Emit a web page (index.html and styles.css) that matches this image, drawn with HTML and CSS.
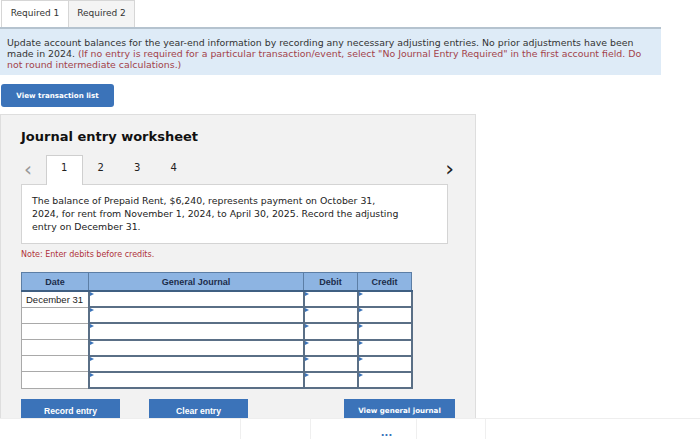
FILE: index.html
```html
<!DOCTYPE html>
<html lang="en">
<head>
    <meta charset="UTF-8">
    <title>Journal entry worksheet</title>
    <link rel="stylesheet" href="styles.css">
</head>
<body>
<div class="tabs">
    <div class="tab active">Required 1</div>
    <div class="tab">Required 2</div>
</div>

<div class="info">
    Update account balances for the year-end information by recording any necessary adjusting entries. No prior adjustments have been made in 2024.
    <span class="hint">(If no entry is required for a particular transaction/event, select "No Journal Entry Required" in the first account field. Do not round intermediate calculations.)</span>
</div>

<button class="btn btn-list">View transaction list</button>

<div class="worksheet">
    <h2>Journal entry worksheet</h2>

    <!-- entry pager -->
    <div class="pager">
        <span class="arrow prev">&lsaquo;</span>
        <span class="page current">1</span>
        <span class="page">2</span>
        <span class="page">3</span>
        <span class="page">4</span>
        <span class="arrow next">&rsaquo;</span>
    </div>

    <div class="desc">
        The balance of Prepaid Rent, $6,240, represents payment on October 31, 2024, for rent from November 1, 2024, to April 30, 2025. Record the adjusting entry on December 31.
    </div>

    <p class="note">Note: Enter debits before credits.</p>

    <table class="journal">
        <thead>
        <tr>
            <th class="col-date">Date</th>
            <th class="col-acct">General Journal</th>
            <th class="col-num">Debit</th>
            <th class="col-num">Credit</th>
        </tr>
        </thead>
        <tbody>
        <tr><td class="date">December 31</td><td class="field"></td><td class="field"></td><td class="field"></td></tr>
        <tr><td class="date"></td><td class="field"></td><td class="field"></td><td class="field"></td></tr>
        <tr><td class="date"></td><td class="field"></td><td class="field"></td><td class="field"></td></tr>
        <tr><td class="date"></td><td class="field"></td><td class="field"></td><td class="field"></td></tr>
        <tr><td class="date"></td><td class="field"></td><td class="field"></td><td class="field"></td></tr>
        <tr><td class="date"></td><td class="field"></td><td class="field"></td><td class="field"></td></tr>
        </tbody>
    </table>

    <div class="actions">
        <button class="btn btn-sq">Record entry</button>
        <button class="btn btn-sq">Clear entry</button>
        <button class="btn btn-sq btn-wide">View general journal</button>
    </div>
</div>

<div class="footer">
    <div class="cell c1"></div>
    <div class="cell c2"></div>
    <div class="cell c3"><span class="dots">&middot;&middot;&middot;</span></div>
    <div class="cell c4"></div>
</div>
</body>
</html>
```

FILE: styles.css
```css
body {
    margin: 0;
    font-family: "DejaVu Sans", Verdana, sans-serif;
    color: #333;
    background: #fff;
    width: 700px;
    height: 439px;
    overflow: hidden;
}

.tabs {
    display: flex;
    height: 27px;
}

.tab {
    width: 67px;
    font-size: 9px;
    line-height: 24px;
    text-align: center;
    color: #333;
    background: #f4f4f4;
    border: 1px solid #d6d6d6;
    border-bottom: none;
    box-sizing: border-box;
}

.tab.active {
    background: #fff;
    border-right: none;
    margin-left: 1px;
}

.info {
    width: 661px;
    box-sizing: border-box;
    height: 48px;
    background: #deebf7;
    border-top: 2px solid #b5c3cf;
    padding: 8px 7px;
    font-size: 9.4px;
    line-height: 11px;
}

.hint {
    color: #a3424a;
}

.btn {
    border: none;
    color: #fff;
    font-family: "Liberation Sans", Arial, sans-serif;
    font-weight: bold;
    font-size: 8.6px;
    cursor: pointer;
    padding: 0;
}

.btn-list {
    display: block;
    margin: 9px 0 0 1px;
    width: 113px;
    height: 23px;
    border-radius: 3px;
    background: #3b73b9;
    font-family: "DejaVu Sans", Verdana, sans-serif;
    font-size: 7.1px;
}

.worksheet {
    margin-top: 7px;
    width: 476px;
    height: 304px;
    box-sizing: border-box;
    background: #f2f2f2;
    border: 1px solid #dedede;
    border-bottom: none;
    padding: 13px 20px 0;
    overflow: hidden;
}

.worksheet h2 {
    margin: 0;
    font-size: 13px;
    line-height: 18px;
    color: #111;
}

.pager {
    display: flex;
    align-items: flex-end;
    height: 30px;
    margin-top: 8px;
    font-size: 10px;
}

.arrow {
    font-size: 20px;
    line-height: 26px;
    height: 28px;
}

.prev {
    width: 25px;
    padding-left: 3px;
    box-sizing: border-box;
    color: #999;
}

.next {
    margin-left: auto;
    margin-right: 1px;
    color: #222;
    font-size: 22px;
}

.page {
    width: 36.5px;
    height: 28px;
    line-height: 24px;
    text-align: center;
    color: #222;
}

.page.current {
    background: #fff;
    border: 1px solid #cfcfcf;
    border-bottom: none;
    height: 30px;
    margin-bottom: -1px;
    box-sizing: border-box;
    position: relative;
}

.desc {
    width: 427px;
    height: 60px;
    box-sizing: border-box;
    background: #fff;
    border: 1px solid #d4d4d4;
    padding: 9px 47px 9px 10px;
    font-size: 9.35px;
    line-height: 13px;
    color: #222;
}

.note {
    margin: 6px 0 0;
    font-size: 8px;
    line-height: 10px;
    color: #b0333a;
}

.journal {
    margin-top: 12px;
    border-collapse: collapse;
    width: 386px;
    font-family: "Liberation Sans", Arial, sans-serif;
    font-size: 9px;
    table-layout: fixed;
}

.journal th {
    height: 17px;
    padding: 0;
    background: #8db4e2;
    color: #1c2d4a;
    border: 1px solid #5c7ea5;
    border-bottom: 2px solid #3f5f82;
    font-weight: bold;
}

.col-date { width: 66px; }
.col-acct { width: 214px; }
.col-num { width: 53px; }

.journal tbody tr {
    height: 16.2px;
}

.journal td {
    padding: 0;
    background: #fff;
}

.journal td.date {
    border: 1px solid #a9a9a9;
    color: #222;
    padding-left: 4px;
    font-size: 9.5px;
}

.journal td.field {
    border: 2px solid #5a6f86;
    position: relative;
}

.journal td.field::before {
    content: "";
    position: absolute;
    left: 0;
    top: 0;
    border-left: 4px solid #3b73b9;
    border-top: 2.5px solid transparent;
    border-bottom: 2.5px solid transparent;
}

.actions {
    display: flex;
    margin-top: 10px;
}

.btn-sq {
    width: 99px;
    height: 23px;
    background: #3b73b9;
    margin-right: 29px;
}

.btn-wide {
    width: 111px;
    margin-left: auto;
    margin-right: 0;
    font-family: "DejaVu Sans", Verdana, sans-serif;
    font-size: 7.1px;
}

.footer {
    display: flex;
    height: 21px;
    border-top: 1px solid #eee;
}

.cell {
    height: 100%;
    border-right: 1px solid #efefef;
}

.c1 { width: 240px; }
.c2 { width: 69px; }
.c3 { width: 105px; text-align: center; }
.c4 { width: 68px; }

.dots {
    display: block;
    margin-top: 12px;
    margin-left: 46px;
    font-size: 10px;
    line-height: 10px;
    color: #3b73b9;
    font-weight: bold;
}
```
